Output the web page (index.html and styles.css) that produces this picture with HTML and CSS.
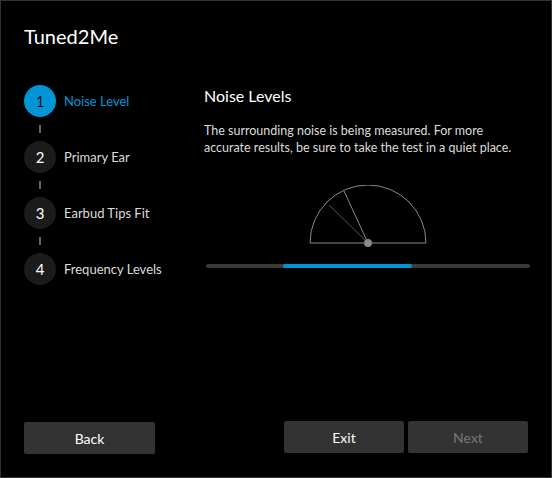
FILE: index.html
```html
<!DOCTYPE html>
<html>
<head>
<meta charset="utf-8">
<link rel="stylesheet" href="styles.css">
</head>
<body>
<div class="window">
  <div class="main">
    <aside class="sidebar">
      <h1 class="app-title">Tuned2Me</h1>
      <ol class="steps">
        <li class="step active"><span class="num">1</span><span class="label">Noise Level</span></li>
        <li class="connector"><span></span></li>
        <li class="step"><span class="num">2</span><span class="label">Primary Ear</span></li>
        <li class="connector"><span></span></li>
        <li class="step"><span class="num">3</span><span class="label">Earbud Tips Fit</span></li>
        <li class="connector"><span></span></li>
        <li class="step"><span class="num">4</span><span class="label">Frequency Levels</span></li>
      </ol>
    </aside>
    <section class="content">
      <h2 class="section-title">Noise Levels</h2>
      <p class="desc">The surrounding noise is being measured. For more accurate results, be sure to take the test in a quiet place.</p>
      <div class="gauge-wrap">
        <svg class="gauge" width="118" height="62" viewBox="0 0 118 62">
          <path d="M1 58 A58 58 0 0 1 117 58 Z" fill="none" stroke="#8a8a8a" stroke-width="1"/>
          <line x1="59" y1="58" x2="20" y2="20" stroke="#555" stroke-width="1"/>
          <line x1="59" y1="58" x2="35" y2="6" stroke="#8a8a8a" stroke-width="1"/>
          <circle cx="59" cy="58" r="4" fill="#8a8a8a"/>
        </svg>
      </div>
      <div class="progress"><div class="progress-fill" style="margin-left:77px;width:129px"></div></div>
    </section>
  </div>
  <footer class="footer">
    <button class="btn back">Back</button>
    <div class="right-btns">
      <button class="btn">Exit</button>
      <button class="btn disabled">Next</button>
    </div>
  </footer>
</div>
</body>
</html>
```

FILE: styles.css
```css
* { box-sizing: border-box; }
html, body { margin: 0; padding: 0; background: #000; }
body { font-family: Lato, "Open Sans", sans-serif; color: #e6e6e6; }
.window {
  width: 552px; height: 478px;
  border: 1px solid #333;
  display: flex; flex-direction: column;
  background: #000;
}
.main { flex: 1; display: flex; }
.sidebar { width: 180px; padding: 23px 0 0 23px; }
.app-title { margin: 0; font-size: 20px; font-weight: 400; line-height: 24px; color: #fff; }
.steps { list-style: none; margin: 37px 0 0 0; padding: 0; }
.step { display: flex; align-items: center; gap: 8px; height: 32px; font-size: 13px; color: #dcdcdc; }
.num {
  width: 32px; height: 32px; border-radius: 50%;
  background: #1b1b1b; color: #fff;
  display: flex; align-items: center; justify-content: center;
  font-size: 15px;
}
.step.active .num { background: #0096d6; color: #111; }
.step.active .label { color: #0096d6; }
.connector { height: 24px; width: 32px; display: flex; align-items: center; justify-content: center; }
.connector span { width: 2px; height: 8px; background: #666; }
.content { flex: 1; padding: 0 21px 0 23px; }
.section-title { margin: 83px 0 0 0; font-size: 16px; font-weight: 400; line-height: 24px; color: #fff; }
.desc { margin: 14px 0 0 0; font-size: 12.5px; line-height: 17px; color: #dcdcdc; }
.gauge-wrap { display: flex; justify-content: center; margin-top: 29px; padding-left: 2px; }
.gauge { display: block; }
.progress { margin: 17px 0 0 2px; height: 4px; border-radius: 2px; background: #3a3a3a; }
.progress-fill { height: 4px; border-radius: 2px; background: #0096d6; }
.footer { display: flex; justify-content: space-between; align-items: flex-start; padding: 0 23px 23px 23px; }
.btn {
  font-family: inherit; font-size: 14px; color: #fff;
  background: #333; border: 0; border-radius: 2px;
  height: 32px; width: 120px; padding: 0;
}
.btn.back { width: 131px; margin-top: 1px; }
.btn.disabled { color: #777; }
.right-btns { display: flex; gap: 4px; }
```
